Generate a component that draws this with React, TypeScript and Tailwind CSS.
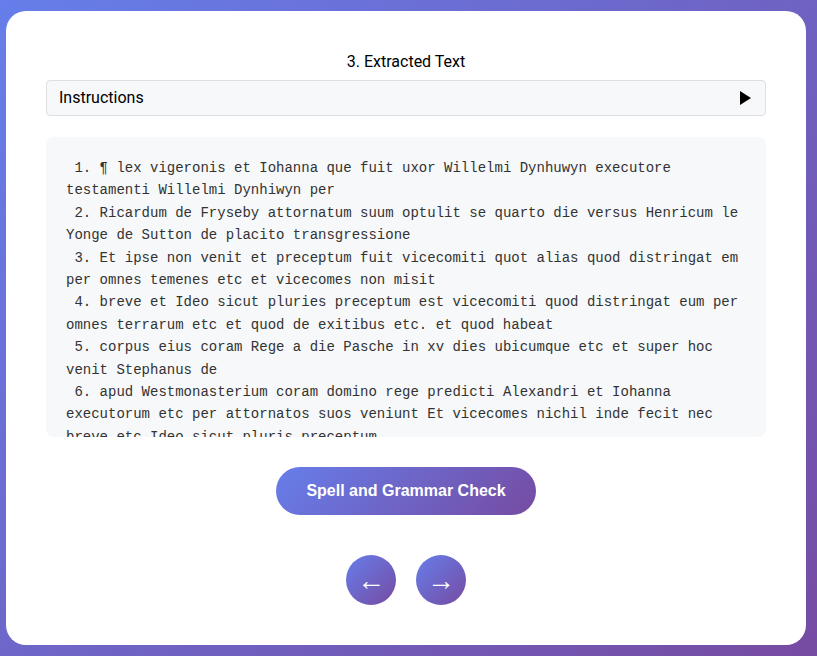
import type React from 'react';

const lines: string[] = [
  ' 1. ¶ lex vigeronis et Iohanna que fuit uxor Willelmi Dynhuwyn executore testamenti Willelmi Dynhiwyn per',
  ' 2. Ricardum de Fryseby attornatum suum optulit se quarto die versus Henricum le Yonge de Sutton de placito transgressione',
  ' 3. Et ipse non venit et preceptum fuit vicecomiti quot alias quod distringat em per omnes temenes etc et vicecomes non misit',
  ' 4. breve et Ideo sicut pluries preceptum est vicecomiti quod distringat eum per omnes terrarum etc et quod de exitibus etc. et quod habeat',
  ' 5. corpus eius coram Rege a die Pasche in xv dies ubicumque etc et super hoc venit Stephanus de',
  ' 6. apud Westmonasterium coram domino rege predicti Alexandri et Iohanna executorum etc per attornatos suos veniunt Et vicecomes nichil inde fecit nec breve etc Ideo sicut pluris preceptum',
  ' 7. est vicecomiti quod distringat eum per omnes terras etc et quod de exitibus etc',
];

const gradient = 'bg-[linear-gradient(135deg,#667eea_0%,#764ba2_100%)]';

function App(): React.ReactElement {
  return (
    <div className={`min-h-screen ${gradient} pt-[11px] pb-[11px] pl-[6px]`}>
      <div className="w-[800px] rounded-[20px] bg-white px-10 pt-10 pb-10">
        {/* Title */}
        <h2 className="mb-[8px] pt-px text-center font-['Roboto',sans-serif] text-base leading-5 text-black">
          3. Extracted Text
        </h2>

        {/* Instructions */}
        <div className="mb-[21px] flex h-9 items-center justify-between rounded border border-[#dcdfe4] bg-[#f7f8fa] pl-3 pr-[14px]">
          <span className="font-['Roboto',sans-serif] text-base text-black">Instructions</span>
          <svg width="11" height="14" viewBox="0 0 11 14" aria-hidden="true">
            <polygon points="0,0 11,7 0,14" fill="#000" />
          </svg>
        </div>

        {/* Extracted text */}
        <div className="h-[300px] overflow-hidden rounded-lg bg-[#f7f8fa] p-5">
          <pre className="whitespace-pre-wrap font-['Liberation_Mono','Courier_New',monospace] text-[14px] leading-[1.6] text-[#333]">
            {lines.join('\n')}
          </pre>
        </div>

        {/* Spell check */}
        <div className="mt-[30px] flex justify-center">
          <button
            type="button"
            className={`h-12 w-[260px] rounded-full ${gradient} font-['Liberation_Sans',Arial,sans-serif] text-base font-bold text-white`}
          >
            Spell and Grammar Check
          </button>
        </div>

        {/* Navigation */}
        <div className="mt-10 flex justify-center gap-5">
          <button
            type="button"
            aria-label="Previous"
            className={`flex h-[50px] w-[50px] items-center justify-center rounded-full ${gradient} pt-[2px] font-['Liberation_Sans',Arial,sans-serif] text-[28px] leading-none text-white`}
          >
            ←
          </button>
          <button
            type="button"
            aria-label="Next"
            className={`flex h-[50px] w-[50px] items-center justify-center rounded-full ${gradient} pt-[2px] font-['Liberation_Sans',Arial,sans-serif] text-[28px] leading-none text-white`}
          >
            →
          </button>
        </div>
      </div>
    </div>
  );
}

export default App;
